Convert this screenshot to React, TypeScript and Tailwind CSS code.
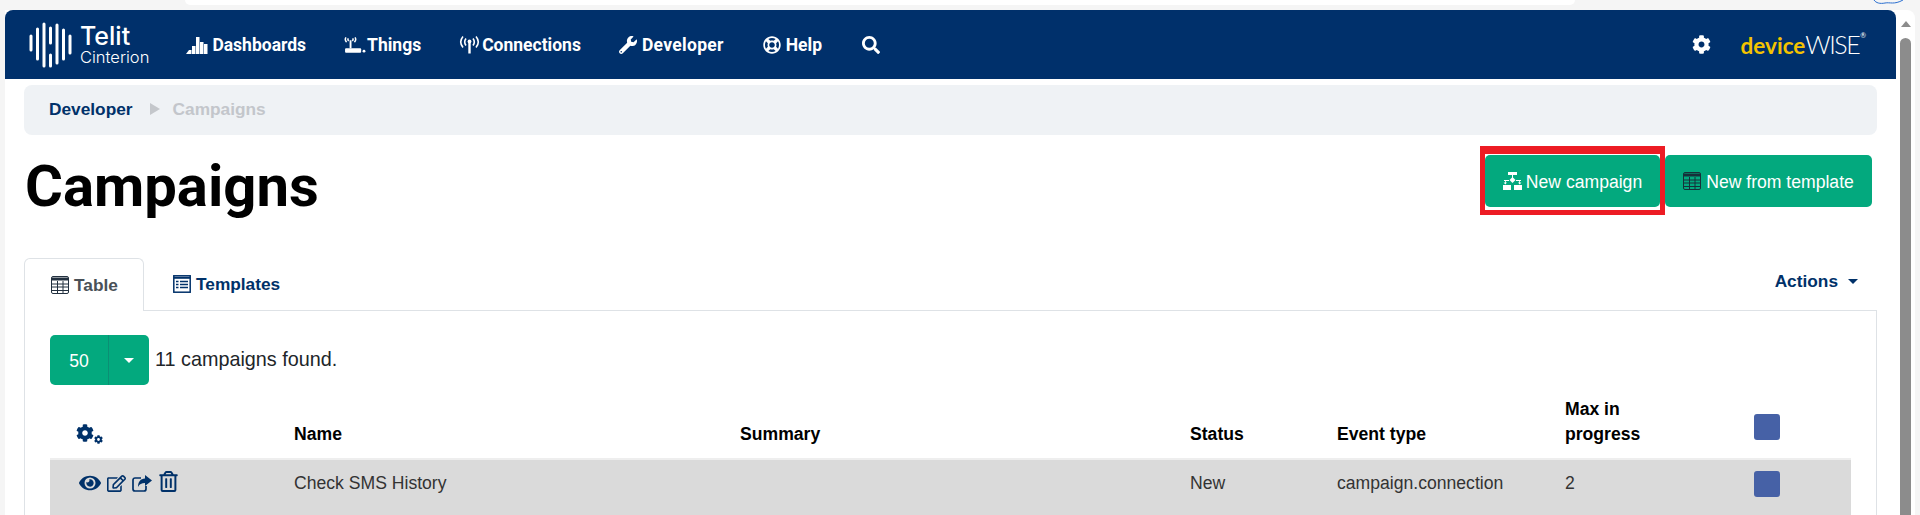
import React from 'react';
import {
  FaCog,
  FaEye,
  FaRegEdit,
  FaRegTrashAlt,
  FaRegLifeRing,
  FaSearch,
  FaWrench,
} from 'react-icons/fa';

const BarsIcon = () => (
  <svg width="22" height="18" viewBox="0 0 22 18" fill="currentColor">
    <path d="M0 18l3-4h2.500v4zM6 18V10h3.500v8zM10 18V1h3.500v17zM14 18V6h3.500v12zM18 18V8h3.500v10z" />
  </svg>
);

const RouterIcon = () => (
  <svg width="22" height="18" viewBox="0 0 23 19" fill="none" stroke="currentColor" strokeWidth="1.600">
    <path d="M2 1.500c-1.200 1.800-.8 3.600.6 5M11.500 1.500c1.200 1.800.8 3.600-.6 5M4.500 2.500c-.7 1-.5 2 .3 2.800M9 2.500c.7 1 .5 2-.3 2.800" />
    <path d="M6.800 4.500V13" strokeWidth="2" />
    <rect x="1" y="13" width="17" height="4.600" rx="1" fill="currentColor" stroke="none" />
    <circle cx="21" cy="16" r="1.500" fill="currentColor" stroke="none" />
  </svg>
);

const SignalIcon = () => (
  <svg width="21" height="19" viewBox="0 0 21 19" fill="none" stroke="currentColor" strokeWidth="1.600">
    <path d="M4 1.500c-3 3.600-3 7.400 0 11M17 1.500c3 3.600 3 7.400 0 11M7 3.500c-1.800 2.400-1.800 4.600 0 7M14 3.500c1.800 2.400 1.800 4.600 0 7" />
    <circle cx="10.500" cy="6.500" r="1.900" fill="currentColor" stroke="none" />
    <path d="M10.500 7v11.500" strokeWidth="2.400" />
  </svg>
);

const FlowIcon = () => (
  <svg width="19" height="18" viewBox="0 0 19 18" fill="currentColor">
    <rect x="5" y="0" width="9" height="3" />
    <rect x="9" y="3" width="1" height="3" />
    <path d="M9.500 5l3 3-3 3-3-3z" />
    <path d="M1 8h5v1H2.800v1.500H4l-1.700 2-1.700-2H2V9H1zM18 8h-5v1h3.200v1.500H15l1.700 2 1.700-2H17V9h1z" />
    <rect x="0" y="13" width="8" height="5" />
    <rect x="11" y="13" width="8" height="5" />
  </svg>
);

const GridIcon = ({ className }: { className: string }) => (
  <svg width="18" height="18" viewBox="0 0 18 18" className={className} fill="none" stroke="currentColor">
    <rect x="0.500" y="0.500" width="17" height="17" rx="1.500" />
    <path d="M1 3h16" strokeWidth="3" />
    <path d="M1 8h16M1 11h16M1 14.500h16M6.500 5v12M12 5v12" />
  </svg>
);

const ListIcon = () => (
  <svg width="18" height="18" viewBox="0 0 18 18" className="text-[#003169]" fill="none" stroke="currentColor" strokeWidth="1.500">
    <rect x="0.800" y="0.800" width="16.400" height="16.400" />
    <path d="M0.800 2.800h16.400" strokeWidth="2" />
    <path d="M3 6.500h2.500M3 9.500h2.500M3 12.500h2.500M7 6.500h8M7 9.500h8M7 12.500h8" />
  </svg>
);

const ShareIcon = () => (
  <svg width="20" height="17" viewBox="0 0 20 17" className="text-[#003169]">
    <path d="M9 3H3a2 2 0 0 0-2 2v9a2 2 0 0 0 2 2h9a2 2 0 0 0 2-2v-3" fill="none" stroke="currentColor" strokeWidth="1.700" />
    <path d="M13 0l7 5.500-7 5.500V8C9.500 8 7.500 9 6 12c0-5 2.500-8.500 7-8.500z" fill="currentColor" />
  </svg>
);

const NavItem = ({ icon, label, className }: { icon: React.ReactNode; label: string; className: string }) => (
  <div className={`flex items-center font-bold text-[17.5px] text-white font-['Roboto',sans-serif] ${className}`}>
    {icon}
    <span className="pt-[2px]">{label}</span>
  </div>
);

const Logo = () => (
  <div className="flex items-center">
    <svg width="44" height="46" viewBox="0 0 44 46" stroke="white" strokeWidth="3" strokeLinecap="round">
      <path d="M2 14v14M8.500 7v30M15 2v42M21.500 6v15M21.500 33v11M28 3v38M34.500 8v29M41 14v17" />
    </svg>
    <div className="ml-[7px] text-white font-['Inter',sans-serif]">
      <div className="text-[25px] leading-[25px] font-medium">Telit</div>
      <div className="text-[16.500px] leading-[16px] font-light">Cinterion</div>
    </div>
  </div>
);

const Checkbox = () => <div className="w-[26px] h-[26px] rounded-[3px] bg-[#4661a6]" />;

export default function App() {
  return (
    <div className="relative w-[1920px] h-[515px] overflow-hidden bg-[#f5f5f5] font-['Liberation_Sans',Arial,sans-serif]">
      <div className="h-[10px] relative">
        <div className="ml-[185px] w-[1390px] h-[5px] bg-white rounded-b-xl" />
        <svg className="absolute left-[1873px] top-0" width="34" height="6" viewBox="0 0 34 6" fill="none" stroke="#2a6fd0" strokeWidth="1">
          <path d="M1 0c2 3 6 4 11 3s9 2 18-3" />
        </svg>
      </div>
      <div className="flex ml-[5px] h-[505px]">
        <div className="w-[1891px] bg-white">
          <div className="h-[69px] bg-[#00306b] rounded-t-lg flex items-center pl-[24px] pr-[30px]">
            <Logo />
            <div className="flex items-center gap-[38px] ml-[37px]">
              <NavItem className="gap-[4px]" icon={<BarsIcon />} label="Dashboards" />
              <NavItem className="gap-[1px]" icon={<RouterIcon />} label="Things" />
              <NavItem className="gap-[2px]" icon={<SignalIcon />} label="Connections" />
              <NavItem className="gap-[5px] tracking-[0.3px]" icon={<FaWrench size={18} />} label="Developer" />
              <NavItem className="gap-[5px] ml-[1px]" icon={<FaRegLifeRing size={18} />} label="Help" />
              <FaSearch size={18} className="text-white ml-[2px]" />
            </div>
            <div className="ml-auto flex items-center">
              <FaCog size={19} className="text-white" />
              <div className="ml-[30px] flex items-baseline font-['Lato',sans-serif]">
                <span className="text-[22.500px] leading-[30px] font-bold text-[#f4c300]">device</span>
                <span className="text-[25px] leading-[30px] font-light tracking-[-1.5px] text-white">WISE</span>
                <span className="ml-[1px] text-[7px] self-start leading-[12px] text-white">®</span>
              </div>
            </div>
          </div>

          <div className="mt-[6px] mx-[19px] h-[50px] rounded-lg bg-[#eff2f5] flex items-center pl-[25px] text-[17.3px] font-bold">
            <span className="text-[#003169]">Developer</span>
            <span className="ml-[17px] -mt-[3px] w-0 h-0 border-y-[6px] border-y-transparent border-l-[10px] border-l-[#c4c7cb]" />
            <span className="ml-[13px] text-[#c3c6cb]">Campaigns</span>
          </div>

          <div className="mt-[20px] h-[52px] flex justify-between pl-[20px] pr-[24px]">
            <h1 className="pt-[2px] text-[58px] leading-[58px] font-bold text-black font-['Roboto',sans-serif]">Campaigns</h1>
            <div className="flex gap-[5px] text-[17.6px] text-white">
              <div className="relative">
                <button className="h-[52px] w-[175px] rounded-[5px] bg-[#03a97e] flex items-center justify-center gap-[4px]">
                  <FlowIcon />
                  <span className="pt-[2px]">New campaign</span>
                </button>
                <div className="absolute -left-[5px] -right-[5px] -top-[9px] -bottom-[8px] border-[#ed1c24] border-x-[5px] border-t-[8px] border-b-[5px]" />
              </div>
              <button className="h-[52px] w-[207px] rounded-[5px] bg-[#03a97e] flex items-center justify-center gap-[5px]">
                <GridIcon className="text-[#16303a]" />
                <span className="pt-[2px]">New from template</span>
              </button>
            </div>
          </div>

          <div className="mt-[51px] mx-[19px]">
            <div className="flex items-end h-[53px] border-b border-[#dee2e6] text-[17.3px] font-bold">
              <div className="h-[53px] w-[120px] -mb-px bg-white border border-b-0 border-[#dee2e6] rounded-t-md flex items-center pl-[26px] gap-[5px] text-[#495057]">
                <GridIcon className="text-[#22303f]" />
                <span className="pt-[2px]">Table</span>
              </div>
              <div className="h-[52px] flex items-center ml-[29px] gap-[5px] text-[#003169]">
                <ListIcon />
                <span className="pt-[2px]">Templates</span>
              </div>
              <div className="ml-auto h-[52px] pb-[5px] pr-[19px] flex items-center gap-[10px] text-[#003169]">
                Actions
                <span className="w-0 h-0 border-x-[5px] border-x-transparent border-t-[5px] border-t-[#003169]" />
              </div>
            </div>

            <div className="border-x border-[#dee2e6] px-[25px] pt-[24px] h-[206px]">
              <div className="flex items-center text-[17.6px]">
                <div className="flex h-[50px] w-[99px] rounded-[5px] bg-[#03a97e] text-white">
                  <div className="w-[58px] pt-[2px] flex items-center justify-center">50</div>
                  <div className="flex-1 flex items-center justify-center border-l border-[#0b8f74]">
                    <span className="w-0 h-0 border-x-[5px] border-x-transparent border-t-[5px] border-t-white" />
                  </div>
                </div>
                <span className="ml-[6px] text-[19.8px] text-[#212529]">11 campaigns found.</span>
              </div>

              <table className="w-[1801px] table-fixed text-left text-[17.6px] leading-[25px]">
                <colgroup>
                  <col className="w-[232px]" />
                  <col className="w-[446px]" />
                  <col className="w-[450px]" />
                  <col className="w-[147px]" />
                  <col className="w-[228px]" />
                  <col className="w-[189px]" />
                  <col className="w-[109px]" />
                </colgroup>
                <thead>
                  <tr className="align-bottom text-black">
                    <th className="pl-[26px] pt-[12px] pb-[16px]">
                      <div className="flex items-end text-[#003169]">
                        <FaCog size={18} />
                        <FaCog size={9} className="-mb-[2px]" />
                      </div>
                    </th>
                    <th className="px-3 pt-[12px] pb-[11px]">Name</th>
                    <th className="px-3 pt-[12px] pb-[11px]">Summary</th>
                    <th className="px-3 pt-[12px] pb-[11px]">Status</th>
                    <th className="px-3 pt-[12px] pb-[11px]">Event type</th>
                    <th className="px-3 pt-[12px] pb-[11px]">Max in<br />progress</th>
                    <th className="px-3 pt-[12px] pb-[18px]"><Checkbox /></th>
                  </tr>
                </thead>
                <tbody>
                  <tr className="align-top text-[#333333] bg-[#dadada] h-[58px] border-y-2 border-[#eeeeee]">
                    <td className="pl-[29px] pt-[12px]">
                      <div className="flex items-center gap-[6px] text-[#003169]">
                        <FaEye size={22} />
                        <FaRegEdit size={19} />
                        <ShareIcon />
                        <FaRegTrashAlt size={21} className="-mt-[3px]" />
                      </div>
                    </td>
                    <td className="px-3 pt-[11px]">Check SMS History</td>
                    <td className="px-3 pt-[11px]"></td>
                    <td className="px-3 pt-[11px]">New</td>
                    <td className="px-3 pt-[11px]">campaign.connection</td>
                    <td className="px-3 pt-[11px]">2</td>
                    <td className="px-3 pt-[11px]"><Checkbox /></td>
                  </tr>
                </tbody>
              </table>
            </div>
          </div>
        </div>

        <div className="w-[19px] bg-white rounded-tr-lg flex flex-col items-center pt-[11px]">
          <span className="w-0 h-0 border-x-[5px] border-x-transparent border-b-[6px] border-b-[#8c8c8c]" />
          <div className="mt-[11px] w-[11px] flex-1 bg-[#8c8c8c] rounded-t-md" />
        </div>
      </div>
    </div>
  );
}
